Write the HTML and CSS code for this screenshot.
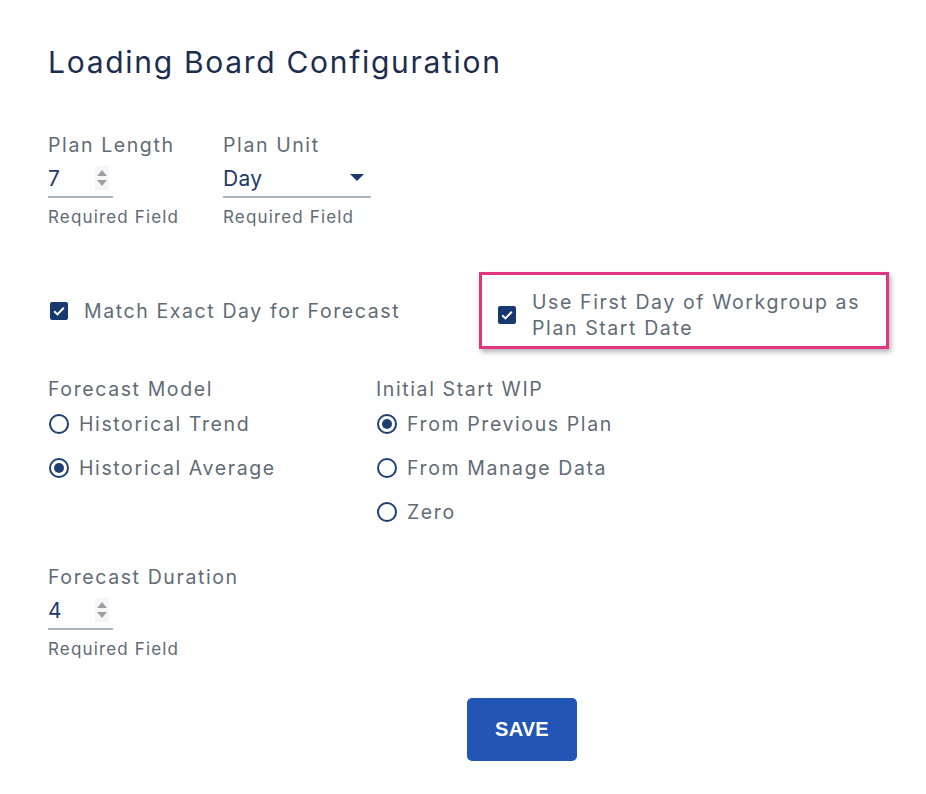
FILE: index.html
```html
<!DOCTYPE html>
<html>
<head>
<meta charset="utf-8">
<link rel="stylesheet" href="styles.css">
</head>
<body>
<div class="page">
  <h1 class="title">Loading Board Configuration</h1>

  <div class="fields">
    <div class="field">
      <div class="label">Plan Length</div>
      <div class="input num">
        <span class="value">7</span>
        <span class="spin"><span class="up"></span><span class="down"></span></span>
      </div>
      <div class="hint">Required Field</div>
    </div>
    <div class="field">
      <div class="label">Plan Unit</div>
      <div class="input select">
        <span class="value">Day</span>
        <span class="caret"></span>
      </div>
      <div class="hint">Required Field</div>
    </div>
  </div>

  <div class="checks">
    <label class="check first">
      <span class="box"><svg viewBox="0 0 18 18" width="18" height="18"><path d="M4.2 9.3l3.2 3.1 6.4-6.6" fill="none" stroke="#fff" stroke-width="2"/></svg></span>
      <span class="check-text">Match Exact Day for Forecast</span>
    </label>
    <label class="check highlight">
      <span class="box"><svg viewBox="0 0 18 18" width="18" height="18"><path d="M4.2 9.3l3.2 3.1 6.4-6.6" fill="none" stroke="#fff" stroke-width="2"/></svg></span>
      <span class="check-text">Use First Day of Workgroup as<br>Plan Start Date</span>
    </label>
  </div>

  <div class="groups">
    <div class="group">
      <div class="label">Forecast Model</div>
      <div class="radio"><span class="ring"></span><span>Historical Trend</span></div>
      <div class="radio"><span class="ring on"></span><span>Historical Average</span></div>
    </div>
    <div class="group">
      <div class="label">Initial Start WIP</div>
      <div class="radio"><span class="ring on"></span><span>From Previous Plan</span></div>
      <div class="radio"><span class="ring"></span><span>From Manage Data</span></div>
      <div class="radio"><span class="ring"></span><span>Zero</span></div>
    </div>
  </div>

  <div class="field duration">
    <div class="label">Forecast Duration</div>
    <div class="input num">
      <span class="value">4</span>
      <span class="spin"><span class="up"></span><span class="down"></span></span>
    </div>
    <div class="hint">Required Field</div>
  </div>

  <div class="actions">
    <button class="save">SAVE</button>
  </div>
</div>
</body>
</html>
```

FILE: styles.css
```css
* { box-sizing: border-box; }
html, body { margin: 0; padding: 0; background: #fff; }
body {
  font-family: Inter, "Noto Sans", sans-serif;
  color: #5f6b76;
}
.page {
  padding: 42px 0 0 48px;
}
.title {
  margin: 0;
  font-size: 30px;
  line-height: 40px;
  font-weight: 400;
  color: #1d2d4f;
  letter-spacing: 1.7px;
}
.fields {
  display: grid;
  grid-template-columns: 175px 148px;
  margin-top: 50px;
}
.label {
  font-size: 19.5px;
  line-height: 26px;
  color: #5f6b76;
  letter-spacing: 1.6px;
}
.input {
  height: 40px;
  border-bottom: 2px solid #aab4be;
  display: flex;
  align-items: center;
  position: relative;
}
.input .value {
  font-size: 21px;
  color: #1e3a6b;
  padding-top: 2px;
  letter-spacing: 0.3px;
}
.num { width: 65px; }
.spin {
  position: absolute;
  left: 47px;
  top: 8px;
  width: 14px;
  height: 24px;
  background: #f6f6f6;
  display: flex;
  flex-direction: column;
  align-items: center;
  justify-content: center;
  gap: 4px;
}
.spin .up {
  width: 0; height: 0;
  border-left: 5px solid transparent;
  border-right: 5px solid transparent;
  border-bottom: 6px solid #9aa0a6;
}
.spin .down {
  width: 0; height: 0;
  border-left: 5px solid transparent;
  border-right: 5px solid transparent;
  border-top: 6px solid #9aa0a6;
}
.select { width: 148px; justify-content: space-between; }
.caret {
  width: 0; height: 0;
  border-left: 7px solid transparent;
  border-right: 7px solid transparent;
  border-top: 7px solid #1e3a6b;
  margin-right: 7px;
}
.hint {
  margin-top: 8px;
  font-size: 17px;
  line-height: 22px;
  color: #5f6b76;
  letter-spacing: 1.15px;
}
.checks {
  display: flex;
  margin-top: 44px;
  align-items: center;
}
.check {
  display: flex;
  align-items: center;
  font-size: 19.5px;
  line-height: 26px;
  letter-spacing: 1.6px;
  color: #5f6b76;
}
.check.first {
  width: 431px;
  padding-left: 2px;
  gap: 16px;
}
.box {
  width: 18px;
  height: 18px;
  border-radius: 2px;
  background: #173a6e;
  display: flex;
  flex: none;
}
.highlight {
  width: 410px;
  height: 77px;
  border: 3px solid #e0357f;
  box-shadow: 2px 3px 5px rgba(0,0,0,0.3);
  padding-left: 16px;
  padding-top: 8px;
  gap: 16px;
}
.groups {
  display: grid;
  grid-template-columns: 328px 300px;
  margin-top: 27px;
}
.radio {
  height: 44px;
  display: flex;
  align-items: center;
  gap: 10px;
  font-size: 19.5px;
  letter-spacing: 1.6px;
  color: #5f6b76;
  padding-left: 1px;
}
.ring {
  width: 20px;
  height: 20px;
  border-radius: 50%;
  border: 2px solid #1e3f73;
  flex: none;
  display: flex;
  align-items: center;
  justify-content: center;
}
.ring.on::after {
  content: "";
  width: 10px;
  height: 10px;
  border-radius: 50%;
  background: #1e3f73;
}
.duration {
  margin-top: 30px;
}
.actions {
  margin-top: 38px;
  padding-left: 419px;
}
.save {
  width: 110px;
  height: 63px;
  border: none;
  border-radius: 5px;
  background: #2256b5;
  color: #fff;
  font-family: "Liberation Sans", Arial, sans-serif;
  font-weight: 700;
  font-size: 20px;
  letter-spacing: 0.2px;
}
```
